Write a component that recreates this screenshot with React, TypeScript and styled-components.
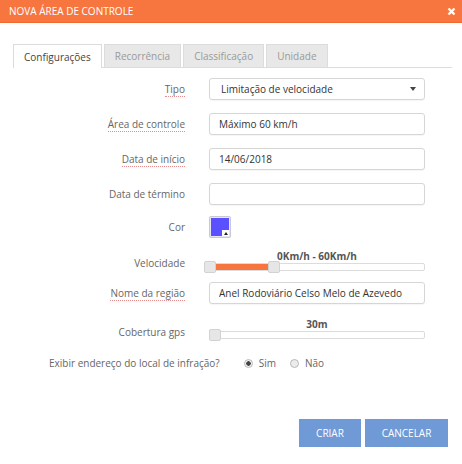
import styled, { createGlobalStyle } from 'styled-components'

const GlobalStyle = createGlobalStyle`
  body {
    margin: 0;
    font-family: 'Open Sans', 'DejaVu Sans', sans-serif;
    font-size: 10px;
    background: #fff;
  }
`

const Styled = {
  Dialog: styled.div`
    width: 462px;
    height: 464px;
    display: flex;
    flex-direction: column;
    background: #fff;
    box-sizing: border-box;
  `,
  Header: styled.div`
    height: 23px;
    background: #f7763f;
    color: #fff;
    display: flex;
    align-items: center;
    justify-content: space-between;
    padding: 0 6px 0 9px;
    font-size: 10px;
    border-bottom: 1px solid #f06a30;
    box-sizing: border-box;
  `,
  Close: styled.svg`
    display: block;
  `,
  Body: styled.div`
    padding: 21px 10px 0 13px;
  `,
  TabBar: styled.div`
    display: flex;
    gap: 2px;
    border-bottom: 1px solid #dcdcdc;
  `,
  Tab: styled.div<{ $active?: boolean }>`
    padding: 0 10px;
    display: flex;
    align-items: center;
    box-sizing: border-box;
    border: 1px solid #dcdcdc;
    border-bottom: none;
    margin-bottom: ${({ $active }) => ($active ? '-1px' : '0')};
    height: ${({ $active }) => ($active ? '24px' : '23px')};
    background: ${({ $active }) => ($active ? '#fff' : '#e8e8e8')};
    color: ${({ $active }) => ($active ? '#444' : '#9a9a9a')};
  `,
  Form: styled.div`
    display: flex;
    flex-direction: column;
    padding-top: 10px;
  `,
  Row: styled.div<{ $mt: number; $end?: boolean }>`
    display: grid;
    grid-template-columns: 172px 216px;
    column-gap: 24px;
    align-items: ${({ $end }) => ($end ? 'end' : 'center')};
    margin-top: ${({ $mt }) => $mt}px;
  `,
  Label: styled.div<{ $pb?: number }>`
    text-align: right;
    color: #666;
    line-height: 14px;
    padding-bottom: ${({ $pb }) => $pb ?? 0}px;
  `,
  Required: styled.span`
    display: inline-block;
    line-height: 13px;
    border-bottom: 1px dotted #e58c8c;
  `,
  Input: styled.input`
    width: 216px;
    height: 22px;
    box-sizing: border-box;
    border: 1px solid #d6d6d6;
    border-radius: 3px;
    padding: 0 9px;
    font: inherit;
    font-size: 10px;
    color: #333;
    outline: none;
    box-shadow: 0 1px 1px rgba(0, 0, 0, 0.04);
  `,
  Select: styled.div`
    width: 216px;
    height: 22px;
    box-sizing: border-box;
    border: 1px solid #d6d6d6;
    border-radius: 3px;
    padding: 0 8px 0 11px;
    display: flex;
    align-items: center;
    justify-content: space-between;
    color: #333;
    box-shadow: 0 1px 1px rgba(0, 0, 0, 0.04);
  `,
  Swatch: styled.div`
    width: 22px;
    height: 22px;
    box-sizing: border-box;
    border: 1px solid #c9c9d6;
    border-radius: 2px;
    background: #e6e6f0;
    padding: 1px;
  `,
  SwatchColor: styled.div<{ $color: string }>`
    position: relative;
    width: 18px;
    height: 18px;
    background: ${({ $color }) => $color};
  `,
  SwatchTrigger: styled.div`
    position: absolute;
    right: 0;
    bottom: 0;
    width: 7px;
    height: 6px;
    background: #fff;
    display: flex;
    align-items: center;
    justify-content: center;
  `,
  Slider: styled.div`
    display: flex;
    flex-direction: column;
  `,
  SliderValue: styled.div`
    text-align: center;
    font-weight: 700;
    color: #555;
    line-height: 12px;
    margin-bottom: 1px;
  `,
  Track: styled.div`
    position: relative;
    height: 8px;
    box-sizing: border-box;
    border: 1px solid #dcdcdc;
    border-radius: 2px;
    background: #fff;
  `,
  Fill: styled.div`
    position: absolute;
    top: 0;
    bottom: 0;
    background: #f7763f;
  `,
  Handle: styled.div`
    position: absolute;
    top: -3px;
    width: 12px;
    height: 12px;
    box-sizing: border-box;
    border: 1px solid #d2d2d2;
    border-radius: 2px;
    background: #e6e6e6;
  `,
  RadioRow: styled.div`
    display: flex;
    align-items: center;
    margin-top: 17px;
    padding-left: 36px;
    color: #666;
    line-height: 14px;
  `,
  Question: styled.span`
    margin-right: 24px;
  `,
  RadioOption: styled.label`
    display: flex;
    align-items: center;
    gap: 6px;
    margin-right: 14px;
  `,
  RadioDot: styled.span<{ $checked?: boolean }>`
    width: 9px;
    height: 9px;
    box-sizing: border-box;
    border-radius: 50%;
    border: 1px solid #b9b9b9;
    background: ${({ $checked }) =>
      $checked ? 'radial-gradient(circle, #444 0 2px, #f2f2f2 2.5px)' : '#ececec'};
  `,
  Footer: styled.div`
    margin-top: auto;
    display: flex;
    justify-content: flex-end;
    gap: 4px;
    padding: 0 14px 17px 0;
  `,
  Button: styled.button<{ $w: number }>`
    width: ${({ $w }) => $w}px;
    height: 28px;
    border: none;
    background: #709ad6;
    color: #fff;
    font: inherit;
    font-size: 10px;
    padding: 0;
  `,
}

const tabs = ['Configurações', 'Recorrência', 'Classificação', 'Unidade']

const App = () => {
  return (
    <>
      <GlobalStyle />
      <Styled.Dialog>
        <Styled.Header>
          <span>NOVA ÁREA DE CONTROLE</span>
          <Styled.Close width="9" height="9" viewBox="0 0 9 9">
            <path d="M1.5 1.5 L7.5 7.5 M7.5 1.5 L1.5 7.5" stroke="#fff" strokeWidth="2.4" />
          </Styled.Close>
        </Styled.Header>
        <Styled.Body>
          <Styled.TabBar>
            {tabs.map((t, i) => (
              <Styled.Tab key={t} $active={i === 0}>
                {t}
              </Styled.Tab>
            ))}
          </Styled.TabBar>
          <Styled.Form>
            <Styled.Row $mt={0}>
              <Styled.Label>
                <Styled.Required>Tipo</Styled.Required>
              </Styled.Label>
              <Styled.Select>
                <span>Limitação de velocidade</span>
                <svg width="6" height="4" viewBox="0 0 6 4">
                  <path d="M0 0 H6 L3 4 Z" fill="#444" />
                </svg>
              </Styled.Select>
            </Styled.Row>
            <Styled.Row $mt={13}>
              <Styled.Label>
                <Styled.Required>Área de controle</Styled.Required>
              </Styled.Label>
              <Styled.Input readOnly value="Máximo 60 km/h" />
            </Styled.Row>
            <Styled.Row $mt={13}>
              <Styled.Label>
                <Styled.Required>Data de início</Styled.Required>
              </Styled.Label>
              <Styled.Input readOnly value="14/06/2018" />
            </Styled.Row>
            <Styled.Row $mt={13}>
              <Styled.Label>Data de término</Styled.Label>
              <Styled.Input readOnly value="" />
            </Styled.Row>
            <Styled.Row $mt={11}>
              <Styled.Label>Cor</Styled.Label>
              <Styled.Swatch>
                <Styled.SwatchColor $color="#5a50ff">
                  <Styled.SwatchTrigger>
                    <svg width="4" height="3" viewBox="0 0 4 3">
                      <path d="M0 3 L2 0 L4 3 Z" fill="#222" />
                    </svg>
                  </Styled.SwatchTrigger>
                </Styled.SwatchColor>
              </Styled.Swatch>
            </Styled.Row>
            <Styled.Row $mt={12} $end>
              <Styled.Label $pb={1}>Velocidade</Styled.Label>
              <Styled.Slider>
                <Styled.SliderValue>0Km/h - 60Km/h</Styled.SliderValue>
                <Styled.Track>
                  <Styled.Fill style={{ left: 6, width: 53 }} />
                  <Styled.Handle style={{ left: -6 }} />
                  <Styled.Handle style={{ left: 58 }} />
                </Styled.Track>
              </Styled.Slider>
            </Styled.Row>
            <Styled.Row $mt={11}>
              <Styled.Label>
                <Styled.Required>Nome da região</Styled.Required>
              </Styled.Label>
              <Styled.Input readOnly value="Anel Rodoviário Celso Melo de Azevedo" />
            </Styled.Row>
            <Styled.Row $mt={14} $end>
              <Styled.Label $pb={0}>Cobertura gps</Styled.Label>
              <Styled.Slider>
                <Styled.SliderValue>30m</Styled.SliderValue>
                <Styled.Track>
                  <Styled.Handle style={{ left: -1 }} />
                </Styled.Track>
              </Styled.Slider>
            </Styled.Row>
            <Styled.RadioRow>
              <Styled.Question>Exibir endereço do local de infração?</Styled.Question>
              <Styled.RadioOption>
                <Styled.RadioDot $checked />
                Sim
              </Styled.RadioOption>
              <Styled.RadioOption>
                <Styled.RadioDot />
                Não
              </Styled.RadioOption>
            </Styled.RadioRow>
          </Styled.Form>
        </Styled.Body>
        <Styled.Footer>
          <Styled.Button $w={62}>CRIAR</Styled.Button>
          <Styled.Button $w={83}>CANCELAR</Styled.Button>
        </Styled.Footer>
      </Styled.Dialog>
    </>
  )
}

export default App
